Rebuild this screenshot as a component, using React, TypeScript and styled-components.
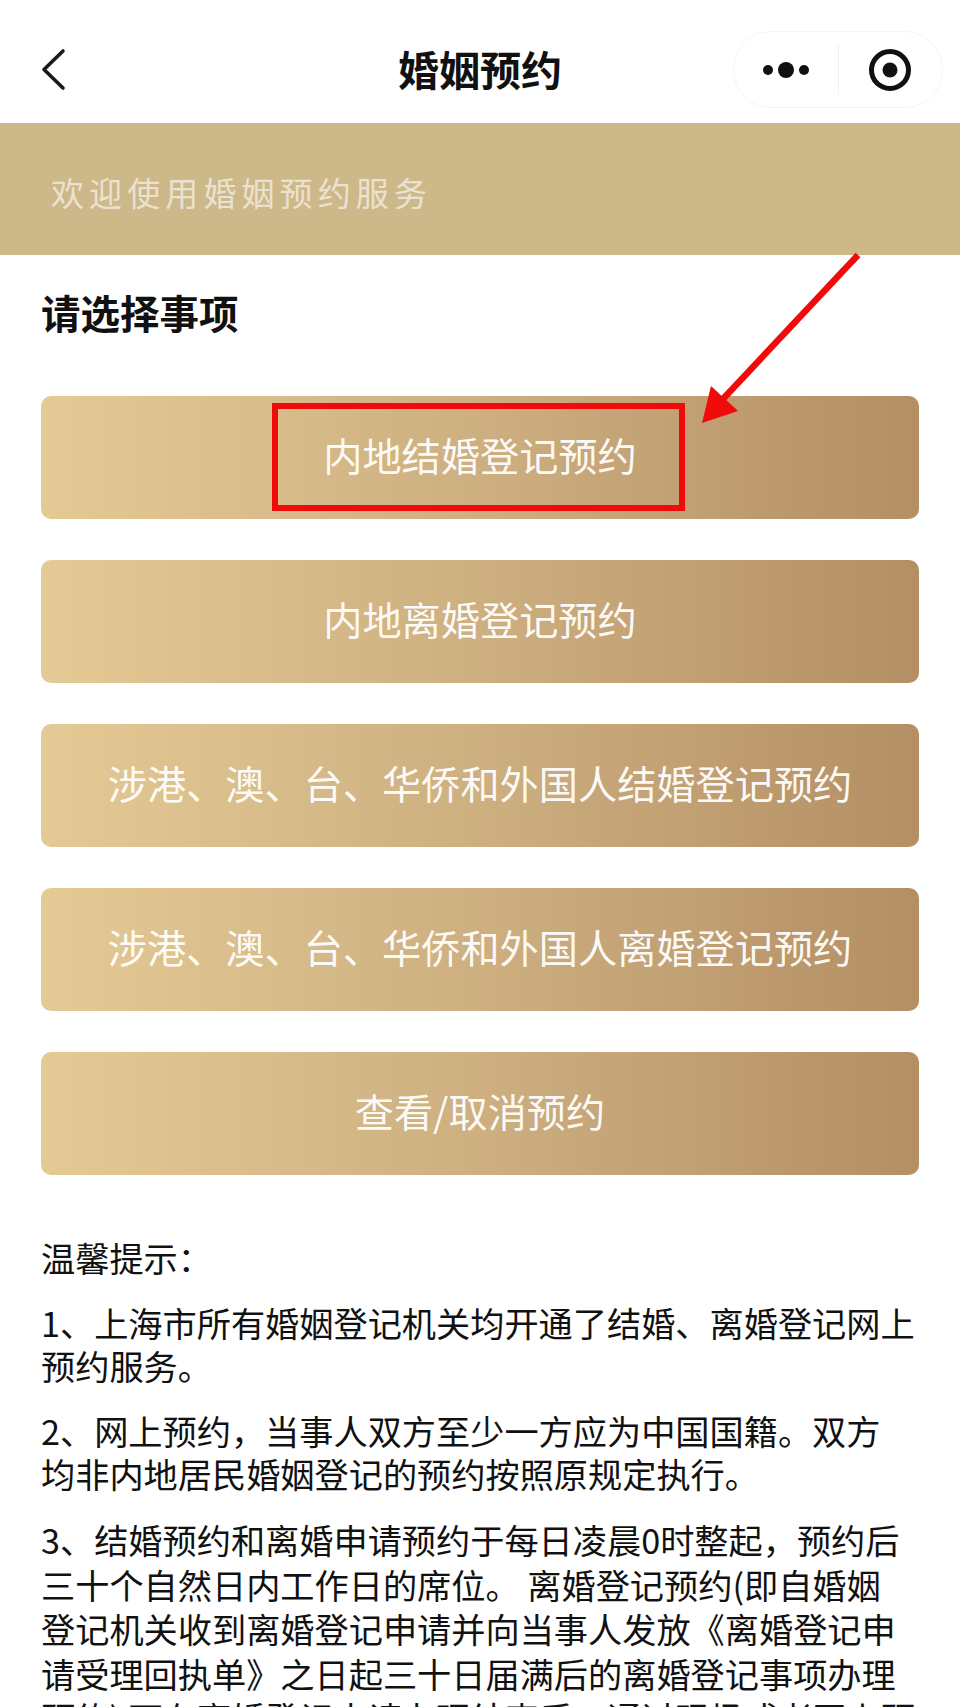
import React from 'react';
import styled, { createGlobalStyle } from 'styled-components';

const GlobalStyle = createGlobalStyle`
  html, body {
    margin: 0;
    padding: 0;
    background: #fff;
  }
  body {
    font-family: 'Noto Sans CJK SC', 'Liberation Sans', sans-serif;
    color: #111;
  }
`;

const Page = styled.div`
  position: relative;
  width: 960px;
  height: 1707px;
  overflow: hidden;
  background: #fff;
`;

const NavBar = styled.header`
  position: relative;
  display: flex;
  align-items: center;
  justify-content: space-between;
  height: 123px;
  padding: 17px 18px 0 41px;
  box-sizing: border-box;
`;

const BackIcon = styled.svg`
  width: 26px;
  height: 44px;
  margin-top: -2px;
`;

const NavTitle = styled.h1`
  position: absolute;
  left: 0;
  right: 0;
  top: 39px;
  margin: 0;
  text-align: center;
  font-size: 41px;
  line-height: 58px;
  font-weight: 700;
  color: #111;
`;

const Capsule = styled.div`
  display: flex;
  align-items: center;
  width: 210px;
  height: 77px;
  margin-top: -1px;
  margin-right: -1px;
  box-sizing: border-box;
  border: 1px solid #f5f5f5;
  border-radius: 38px;
  background: #fff;
`;

const CapsuleHalf = styled.div`
  display: flex;
  align-items: center;
  justify-content: center;
  height: 50px;
  flex: 1;
  & + & {
    border-left: 1px solid #f1f1f1;
  }
`;

const Banner = styled.div`
  display: flex;
  align-items: center;
  height: 132px;
  box-sizing: border-box;
  padding: 6px 0 0 51px;
  background: #cdb88a;
  color: rgba(255, 255, 255, 0.62);
  font-size: 33px;
  letter-spacing: 5.1px;
`;

const Content = styled.main`
  padding: 0 41px;
`;

const SectionTitle = styled.h2`
  margin: 29px 0 56px;
  font-size: 39.5px;
  line-height: 56px;
  font-weight: 700;
  color: #111;
`;

const ButtonList = styled.div`
  display: flex;
  flex-direction: column;
  gap: 41px;
`;

const ActionButton = styled.div`
  position: relative;
  display: flex;
  align-items: center;
  justify-content: center;
  height: 123px;
  box-sizing: border-box;
  padding-bottom: 8px;
  border-radius: 10px;
  background: linear-gradient(90deg, #e4ca95 0%, #cdaf80 50%, #b48f64 100%);
  color: rgba(255, 255, 255, 0.95);
  font-size: 39.2px;
`;

const Highlight = styled.div`
  position: absolute;
  left: 231px;
  top: 7px;
  width: 413px;
  height: 108px;
  box-sizing: border-box;
  border: 6px solid #f20a0a;
`;

const Tips = styled.section`
  margin-top: 61px;
  font-size: 34.2px;
  color: #111;
`;

const TipLine = styled.p<{ $loose?: boolean }>`
  margin: 0 0 22px;
  line-height: ${({ $loose }) => ($loose ? '44.6px' : '43px')};
  white-space: nowrap;
`;

const PointerArrow = styled.svg`
  position: absolute;
  left: 690px;
  top: 245px;
  width: 180px;
  height: 190px;
  pointer-events: none;
`;

const buttons = [
  '内地结婚登记预约',
  '内地离婚登记预约',
  '涉港、澳、台、华侨和外国人结婚登记预约',
  '涉港、澳、台、华侨和外国人离婚登记预约',
  '查看/取消预约',
];

export default function App() {
  return (
    <Page>
      <GlobalStyle />
      <NavBar>
        <BackIcon viewBox="0 0 26 44" fill="none">
          <path
            d="M22 4 L3 22.5 L22 41"
            stroke="#1a1a1a"
            strokeWidth="3.6"
            strokeLinecap="round"
            strokeLinejoin="round"
          />
        </BackIcon>
        <NavTitle>婚姻预约</NavTitle>
        <Capsule>
          <CapsuleHalf>
            <svg width="54" height="20" viewBox="0 0 54 20">
              <circle cx="9" cy="10" r="5" fill="#111" />
              <circle cx="27" cy="10" r="8" fill="#111" />
              <circle cx="45" cy="10" r="5" fill="#111" />
            </svg>
          </CapsuleHalf>
          <CapsuleHalf>
            <svg width="44" height="44" viewBox="0 0 44 44">
              <circle cx="22" cy="22" r="18.5" fill="none" stroke="#111" strokeWidth="5" />
              <circle cx="22" cy="22" r="7.5" fill="#111" />
            </svg>
          </CapsuleHalf>
        </Capsule>
      </NavBar>

      <Banner>欢迎使用婚姻预约服务</Banner>

      <Content>
        <SectionTitle>请选择事项</SectionTitle>
        <ButtonList>
          {buttons.map((label, index) => (
            <ActionButton key={label}>
              {label}
              {index === 0 && <Highlight />}
            </ActionButton>
          ))}
        </ButtonList>

        <Tips>
          <TipLine>温馨提示：</TipLine>
          <TipLine>
            1、上海市所有婚姻登记机关均开通了结婚、离婚登记网上
            <br />
            预约服务。
          </TipLine>
          <TipLine>
            2、网上预约，当事人双方至少一方应为中国国籍。双方
            <br />
            均非内地居民婚姻登记的预约按照原规定执行。
          </TipLine>
          <TipLine $loose>
            3、结婚预约和离婚申请预约于每日凌晨0时整起，预约后
            <br />
            三十个自然日内工作日的席位。 离婚登记预约(即自婚姻
            <br />
            登记机关收到离婚登记申请并向当事人发放《离婚登记申
            <br />
            请受理回执单》之日起三十日届满后的离婚登记事项办理
            <br />
            预约) 可在离婚登记申请办理结束后，通过现场或者网上预
          </TipLine>
        </Tips>
      </Content>

      <PointerArrow viewBox="690 245 180 190">
        <line x1="858" y1="255" x2="722" y2="400" stroke="#f20a0a" strokeWidth="6.5" />
        <polygon points="702,423 711,386 738,411" fill="#f20a0a" />
      </PointerArrow>
    </Page>
  );
}
